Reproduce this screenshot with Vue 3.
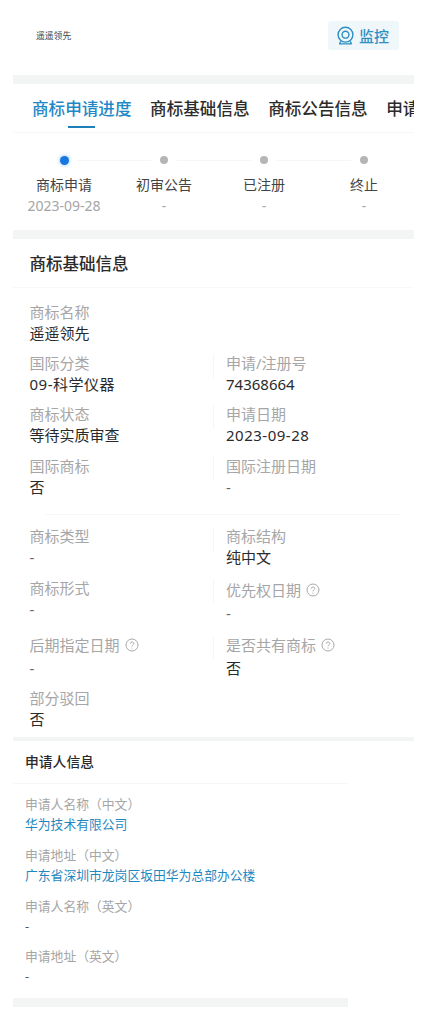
<script setup>
const tabs = ['商标申请进度', '商标基础信息', '商标公告信息', '申请人信息']
const steps = [
  { name: '商标申请', date: '2023-09-28', active: true },
  { name: '初审公告', date: '-' },
  { name: '已注册', date: '-' },
  { name: '终止', date: '-' }
]
const rowsA = [
  { cls: 'r0', left: { label: '商标名称', value: '遥遥领先' } },
  { left: { label: '国际分类', value: '09-科学仪器', spaced: true }, right: { label: '申请/注册号', value: '74368664' } },
  { left: { label: '商标状态', value: '等待实质审查' }, right: { label: '申请日期', value: '2023-09-28', spaced: true } },
  { left: { label: '国际商标', value: '否' }, right: { label: '国际注册日期', value: '-', muted: true } }
]
const rowsB = [
  { cls: 'r1', left: { label: '商标类型', value: '-', muted: true }, right: { label: '商标结构', value: '纯中文' } },
  { cls: 'r2', left: { label: '商标形式', value: '-', muted: true }, right: { label: '优先权日期', value: '-', muted: true, help: true, shift: true } },
  { cls: 'r3', left: { label: '后期指定日期', value: '-', muted: true, help: true, tall: true }, right: { label: '是否共有商标', value: '否', help: true, tall: true } },
  { cls: 'r4', left: { label: '部分驳回', value: '否' } }
]
const applicant = [
  { label: '申请人名称（中文）', value: '华为技术有限公司', link: true },
  { label: '申请地址（中文）', value: '广东省深圳市龙岗区坂田华为总部办公楼', link: true },
  { label: '申请人名称（英文）', value: '-' },
  { label: '申请地址（英文）', value: '-' }
]
</script>

<template>
  <div class="page">
    <header class="top">
      <span class="brand">遥遥领先</span>
      <button class="monitor">
        <svg class="cam" viewBox="0 0 20 20" width="19" height="19" fill="none" stroke="#2f8fc1">
          <circle cx="10" cy="9.2" r="7.8" stroke-width="1.5" />
          <circle cx="10" cy="9.2" r="3.6" stroke-width="1.5" />
          <path d="M5 16.2 L3.8 18.8 H16.2 L15 16.2" stroke-width="1.4" stroke-linejoin="round" />
        </svg>
        <span>监控</span>
      </button>
    </header>
    <div class="band"></div>

    <nav class="tabs">
      <div v-for="(t, i) in tabs" :key="t" class="tab" :class="{ on: i === 0 }">{{ t }}</div>
    </nav>

    <section class="steps">
      <div v-for="(s, i) in steps" :key="s.name" class="step">
        <div class="track">
          <i v-if="i < 3" class="line"></i>
          <b class="dot" :class="{ on: s.active }"></b>
        </div>
        <div class="s-name">{{ s.name }}</div>
        <div class="s-date">{{ s.date }}</div>
      </div>
    </section>
    <div class="band"></div>

    <section class="basic">
      <h2 class="title">商标基础信息</h2>
      <div class="group first">
        <div v-for="r in rowsA" :key="r.left.label" class="row" :class="r.cls">
          <div class="field">
            <div class="lab">{{ r.left.label }}</div>
            <div class="val" :class="{ spaced: r.left.spaced }">{{ r.left.value }}</div>
          </div>
          <template v-if="r.right">
            <i class="vline"></i>
            <div class="field">
              <div class="lab">{{ r.right.label }}</div>
              <div class="val" :class="{ muted: r.right.muted, spaced: r.right.spaced }">{{ r.right.value }}</div>
            </div>
          </template>
        </div>
      </div>
      <div class="split"></div>
      <div class="group">
        <div v-for="r in rowsB" :key="r.left.label" class="row" :class="r.cls">
          <div class="field">
            <div class="lab">
              {{ r.left.label }}
              <svg v-if="r.left.help" class="help" viewBox="0 0 14 14" width="14" height="14" fill="none" stroke="#a9a9a9">
                <circle cx="7" cy="7" r="6" />
                <path d="M5.3 5.6 C5.3 3.4 8.8 3.5 8.8 5.5 C8.8 6.8 7 6.8 7 8.3 M7 9.6 V10.5" />
              </svg>
            </div>
            <div class="val" :class="{ muted: r.left.muted, tall: r.left.tall }">{{ r.left.value }}</div>
          </div>
          <template v-if="r.right">
            <i class="vline"></i>
            <div class="field" :class="{ shift: r.right.shift }">
              <div class="lab">
                {{ r.right.label }}
                <svg v-if="r.right.help" class="help" viewBox="0 0 14 14" width="14" height="14" fill="none" stroke="#a9a9a9">
                  <circle cx="7" cy="7" r="6" />
                  <path d="M5.3 5.6 C5.3 3.4 8.8 3.5 8.8 5.5 C8.8 6.8 7 6.8 7 8.3 M7 9.6 V10.5" />
                </svg>
              </div>
              <div class="val" :class="{ muted: r.right.muted, tall: r.right.tall }">{{ r.right.value }}</div>
            </div>
          </template>
        </div>
      </div>
    </section>
    <div class="band thin"></div>

    <section class="applicant">
      <h2 class="a-title">申请人信息</h2>
      <div class="a-list">
        <div v-for="a in applicant" :key="a.label" class="a-item">
          <div class="a-lab">{{ a.label }}</div>
          <div class="a-val" :class="{ link: a.link }">{{ a.value }}</div>
        </div>
      </div>
      <div class="band"></div>
    </section>
  </div>
</template>

<style>
html, body { background: #fff; }
</style>

<style scoped>
.page {
  width: 401px;
  margin-left: 13px;
  height: 1018px;
  overflow: hidden;
  background: #fff;
  font-family: "Noto Sans", "Noto Sans CJK SC", sans-serif;
  color: #222;
}
.top {
  height: 75px;
  display: flex;
  align-items: center;
  justify-content: space-between;
  padding: 0 15px 5px 23px;
  box-sizing: border-box;
}
.brand { font-size: 8.8px; color: #444; }
.monitor {
  width: 71px;
  height: 29px;
  border: 0;
  border-radius: 3px;
  background: #eff7fb;
  display: flex;
  align-items: center;
  gap: 4px;
  padding: 0 0 0 8px;
  font: inherit;
  font-size: 15px;
  font-weight: 500;
  color: #2f8fc1;
}
.band { height: 9px; background: #f3f4f4; }
.band.thin { height: 4px; }
.tabs {
  height: 49px;
  box-sizing: border-box;
  display: flex;
  gap: 18.5px;
  padding: 12px 0 0 19px;
  border-bottom: 1px solid #f6f6f6;
  overflow: hidden;
}
.tab {
  flex: none;
  position: relative;
  font-size: 16.6px;
  line-height: 26px;
  font-weight: 500;
  color: #2b2b2b;
}
.tab.on { color: #1f88c6; }
.tab.on::after {
  content: "";
  position: absolute;
  left: 36px;
  top: 30px;
  width: 27px;
  height: 2px;
  background: #1f7fb8;
}
.steps {
  height: 97px;
  box-sizing: border-box;
  display: grid;
  grid-template-columns: repeat(4, 100px);
  padding: 21px 0 0 1px;
}
.step { display: flex; flex-direction: column; align-items: center; }
.track {
  position: relative;
  width: 100%;
  height: 12px;
  display: flex;
  justify-content: center;
  align-items: center;
}
.line {
  position: absolute;
  left: 63px;
  width: 74px;
  top: 6px;
  height: 1px;
  background: #f5f5f5;
}
.dot { width: 8px; height: 8px; border-radius: 50%; background: #b5b5b5; }
.dot.on { width: 9px; height: 9px; background: #1677e0; box-shadow: 0 0 4px #8dbff0; }
.s-name { margin-top: 7px; font-size: 14px; line-height: 23px; color: #444; }
.s-date { font-size: 14px; line-height: 20px; color: #a5a5a5; }
.title {
  margin: 0;
  height: 49px;
  box-sizing: border-box;
  padding: 13px 0 0 16.5px;
  border-bottom: 1px solid #f8f8f8;
  font-size: 16.5px;
  line-height: 24px;
  font-weight: 500;
  color: #2a2a2a;
}
.group { padding-left: 16.5px; }
.group.first { padding-top: 13px; }
.row {
  display: grid;
  grid-template-columns: 183.5px 1px 1fr;
  column-gap: 0;
  height: 51.5px;
}
.row .field:last-child:not(:first-child) { margin-left: 12px; }
.field { min-width: 0; }
.lab { font-size: 15px; line-height: 22px; color: #a6a6a6; display: flex; align-items: center; gap: 5px; }
.val { font-size: 15px; line-height: 21px; color: #2a2a2a; }
.val.muted { color: #666; }
.val.tall { margin-top: 2px; }
.val.spaced { letter-spacing: .5px; }
.shift { padding-top: 2px; }
.shift .val { margin-top: 2px; }
.vline { width: 1px; height: 24px; margin-top: 2px; background: #f6f6f6; }
.split { height: 1px; margin: 8px 14px 10px 32px; background: #f7f7f7; }
.r0 { height: 50.5px; }
.r1 { height: 52px; }
.r2 { height: 57px; }
.r3 { height: 53px; }
.r4 { height: 50px; }
.applicant { width: 335px; }
.a-title {
  margin: 0;
  height: 43px;
  box-sizing: border-box;
  padding: 11px 0 0 12px;
  border-bottom: 1px solid #f6f6f6;
  font-size: 13.8px;
  line-height: 20px;
  font-weight: 500;
  color: #2a2a2a;
}
.a-list { padding: 10.4px 0 0 12px; height: 214px; box-sizing: border-box; }
.a-item { height: 50.7px; font-size: 12.8px; line-height: 20px; }
.a-lab { color: #a6a6a6; }
.a-val { color: #555; }
.a-val.link { color: #1f88c0; }
</style>
